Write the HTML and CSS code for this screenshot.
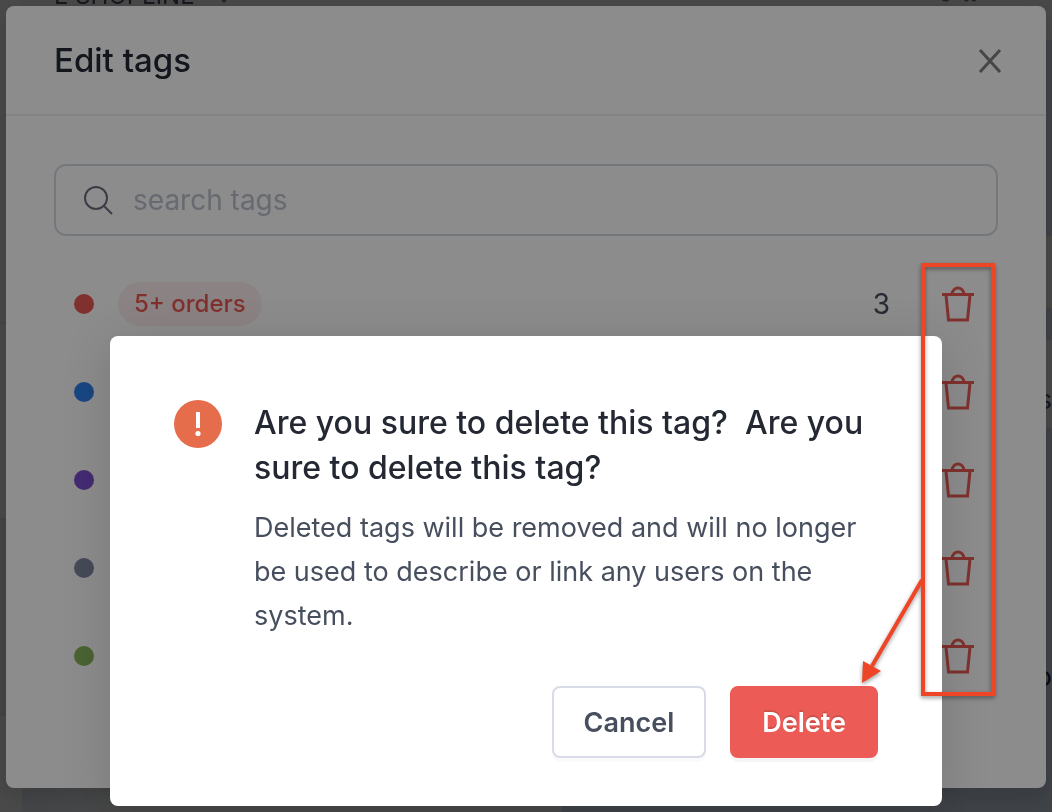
FILE: index.html
```html
<!DOCTYPE html>
<html lang="en">
  <head>
    <meta charset="UTF-8" />
    <meta name="viewport" content="width=device-width, initial-scale=1.0" />
    <title>Edit tags</title>
    <link rel="stylesheet" href="styles.css">
  </head>
  <body>
    <svg class="sprite" aria-hidden="true">
      <symbol id="trash" viewBox="0 0 32 36">
        <path d="M0 8.500h32M4 9l2.500 25h19L28 9M10 8c1-8 11-8 12 0" />
      </symbol>
    </svg>
    <div class="page">
      <div class="menu">
        <div class="menu-item"></div>
        <div class="menu-item"></div>
        <div class="menu-item active"></div>
        <div class="menu-item"></div>
      </div>
      <div class="content">
        <div class="store">
          <span>E SHOPLINE</span>
          <svg class="caret" viewBox="0 0 10 6"><path d="M0 0h10L5 6z" /></svg>
          <svg class="tools" viewBox="0 0 70 6">
            <path d="M0 0h16q-8 6-16 0zM45 0h10q-5 6-10 0zM60 0h10q-5 6-10 0z" />
          </svg>
        </div>
        <div class="columns">
          <div class="list"></div>
          <div class="detail">
            <div class="block"></div>
            <div class="block-dim"></div>
            <div class="block">s</div>
            <div class="note">o</div>
          </div>
        </div>
      </div>
    </div>
    <div class="scrim">
      <section class="modal" aria-labelledby="modal-title">
        <header class="modal-header">
          <h1 id="modal-title">Edit tags</h1>
          <button class="close" aria-label="Close">
            <svg viewBox="0 0 24 26"><path d="M2 3l20 22M22 3L2 25" /></svg>
          </button>
        </header>
        <div class="modal-body">
          <label class="search">
            <svg viewBox="0 0 30 30">
              <circle cx="13" cy="13" r="11" />
              <path d="M21 21l8 8" />
            </svg>
            <input type="text" placeholder="search tags" aria-label="Search tags" />
          </label>
          <ul class="tags">
            <li>
              <span class="dot red"></span>
              <span class="chip">5+ orders</span>
              <span class="count">3</span>
              <button class="remove" aria-label="Delete tag"><svg><use href="#trash" /></svg></button>
            </li>
            <li>
              <span class="dot blue"></span>
              <button class="remove" aria-label="Delete tag"><svg><use href="#trash" /></svg></button>
            </li>
            <li>
              <span class="dot purple"></span>
              <button class="remove" aria-label="Delete tag"><svg><use href="#trash" /></svg></button>
            </li>
            <li>
              <span class="dot gray"></span>
              <button class="remove" aria-label="Delete tag"><svg><use href="#trash" /></svg></button>
            </li>
            <li>
              <span class="dot green"></span>
              <button class="remove" aria-label="Delete tag"><svg><use href="#trash" /></svg></button>
            </li>
          </ul>
        </div>
      </section>
    </div>
    <div class="scrim scrim-confirm">
      <section class="confirm" role="alertdialog" aria-labelledby="confirm-title">
        <svg class="warning" viewBox="0 0 48 48">
          <circle cx="24" cy="24" r="24" />
          <path d="M22 12h4v16h-4z" />
          <circle class="point" cx="24" cy="33.500" r="2.600" />
        </svg>
        <div class="message">
          <h2 id="confirm-title">Are you sure to delete this tag?&nbsp; Are you sure to delete this tag?</h2>
          <p>Deleted tags will be removed and will no longer be used to describe or link any users on the system.</p>
        </div>
        <div class="actions">
          <button class="btn">Cancel</button>
          <button class="btn btn-danger">Delete</button>
        </div>
      </section>
    </div>
    <svg class="annotation" viewBox="0 0 140 440" aria-hidden="true">
      <rect x="65" y="6" width="70" height="429" />
      <path class="shaft" d="M64 321L14 407" />
      <path class="head" d="M4 424l1-22 18 10z" />
    </svg>
  </body>
</html>
```

FILE: styles.css
```css
* {
  box-sizing: border-box;
}
body {
  margin: 0;
  min-height: 100vh;
  overflow: hidden;
  font-family: Inter, "Liberation Sans", sans-serif;
  font-size: 27px;
  color: #474f5e;
}
h1,
h2,
p,
ul {
  margin: 0;
  padding: 0;
}
button {
  font: inherit;
  cursor: pointer;
}
svg {
  display: block;
  fill: none;
}
.sprite {
  position: absolute;
  width: 0;
  height: 0;
}
.page {
  position: fixed;
  inset: 0;
  display: flex;
  background: #f2f2f2;
}
.menu {
  width: 22px;
}
.menu-item {
  height: 196px;
  border-bottom: 2px solid #e0e0e0;
}
.menu-item:first-child {
  height: 324px;
}
.active {
  background: #e0e6ee;
}
.content {
  flex: 1;
  display: flex;
  flex-direction: column;
}
.store {
  display: flex;
  align-items: flex-start;
  gap: 24px;
  height: 40px;
  padding: 0 58px 0 32px;
  background: #eeeef2;
  line-height: 0;
  font-size: 24px;
}
.store span {
  margin-top: -4px;
}
.store svg {
  fill: #6a6f88;
}
.caret {
  width: 10px;
  height: 3px;
}
.tools {
  width: 70px;
  height: 3px;
  margin-left: auto;
}
.columns {
  flex: 1;
  display: flex;
}
.list {
  flex: 55;
  background: linear-gradient(to right, #dde3ec, #eeeeee 20%);
}
.detail {
  flex: 50;
  background: #cfd9ea;
  text-align: right;
}
.block {
  height: 196px;
}
.block-dim {
  height: 72px;
  background: #eeeeea;
}
.block-dim + .block {
  height: 120px;
  border-top: 32px solid #cfd9ea;
  background: #eeeeee;
  line-height: 120px;
}
.note {
  margin-top: 232px;
  color: #242833;
}
.scrim {
  position: fixed;
  inset: 0;
  padding: 6px;
  background: rgba(0, 0, 0, 0.45);
}
.modal {
  background: white;
  border-radius: 8px;
  box-shadow: 0 8px 24px rgba(0, 0, 0, 0.15);
}
.modal-header {
  display: flex;
  justify-content: space-between;
  align-items: center;
  height: 110px;
  padding: 0 44px 0 48px;
  border-bottom: 2px solid #eeeeee;
}
h1 {
  font-size: 33px;
  font-weight: 500;
  color: #242833;
}
.close {
  padding: 0;
  border: none;
  background: none;
}
.close svg {
  width: 24px;
  height: 26px;
  stroke: #808080;
  stroke-width: 3;
}
.modal-body {
  padding: 48px 48px 88px;
}
.search {
  display: flex;
  align-items: center;
  gap: 20px;
  height: 72px;
  padding: 0 27px;
  border: 2px solid #d3dae4;
  border-radius: 12px;
}
.search svg {
  width: 30px;
  height: 30px;
  stroke: #6b7080;
  stroke-width: 2;
}
.search input {
  flex: 1;
  padding: 0;
  border: none;
  outline: none;
  background: none;
  font: inherit;
  font-size: 28px;
}
.search input::placeholder {
  color: #bcc1cc;
}
.tags {
  margin-top: 24px;
  list-style: none;
}
.tags li {
  display: flex;
  align-items: center;
  height: 88px;
  padding: 0 24px 0 20px;
}
.dot {
  width: 20px;
  height: 20px;
  border-radius: 50%;
}
.red {
  background: #ea5a55;
}
.blue {
  background: #2f80ed;
}
.purple {
  background: #7a4fd0;
}
.gray {
  background: #7f889f;
}
.green {
  background: #88b45b;
}
.chip {
  margin-left: 24px;
  padding: 0 16px;
  border-radius: 22px;
  background: #fdeeee;
  color: #ea5a55;
  font-size: 24px;
  font-weight: 500;
  line-height: 44px;
}
.count {
  margin-left: auto;
  color: #474f5e;
  font-size: 28px;
}
.remove {
  margin-left: auto;
  padding: 0;
  border: none;
  background: none;
}
.count + .remove {
  margin-left: 52px;
}
.remove svg {
  width: 32px;
  height: 36px;
  stroke: #ea5a55;
  stroke-width: 3;
}
.scrim-confirm {
  padding: 336px 110px 0;
}
.confirm {
  display: grid;
  grid-template-columns: 48px 1fr;
  column-gap: 32px;
  row-gap: 48px;
  padding: 64px 64px 48px;
  border-radius: 8px;
  background: white;
  box-shadow: 0 8px 48px rgba(0, 0, 0, 0.15);
}
.warning {
  width: 48px;
  height: 48px;
  fill: #e66d4c;
}
.warning path,
.warning .point {
  fill: white;
}
h2 {
  margin-bottom: 16px;
  font-size: 32px;
  font-weight: 500;
  line-height: 45px;
  color: #242833;
}
p {
  line-height: 44px;
}
.actions {
  grid-column: 1 / -1;
  display: flex;
  justify-content: flex-end;
  gap: 24px;
}
.btn {
  height: 72px;
  padding: 0 30px;
  border: 2px solid #d8dbe8;
  border-radius: 8px;
  background: white;
  box-shadow: 0 4px 0 rgba(0, 0, 0, 0.02);
  color: #474f5e;
  font-weight: 600;
}
.btn-danger {
  border-color: #ec5b56;
  background: #ec5b56;
  box-shadow: 0 4px 0 rgba(0, 0, 0, 0.04);
  color: white;
  text-shadow: 0 -2px 0 rgba(0, 0, 0, 0.12);
}
.annotation {
  position: fixed;
  top: 259px;
  right: 54px;
  width: 140px;
  height: 440px;
  filter: drop-shadow(0 2px 2px rgba(0, 0, 0, 0.4));
}
.annotation rect,
.shaft {
  stroke: #ee4526;
  stroke-width: 4;
}
.head {
  fill: #ee4526;
}
```
